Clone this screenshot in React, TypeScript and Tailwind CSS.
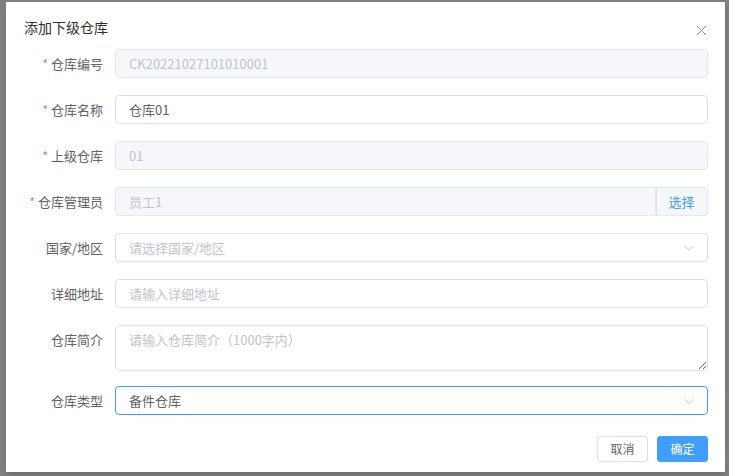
import React from "react";

const font = { fontFamily: '"Noto Sans CJK SC", "Liberation Sans", sans-serif' };

function Chevron ()
{
  return (
    <svg width="12" height="12" viewBox="0 0 12 12" className="text-[#c0c4cc]">
      <path d="M1.5 4 L6 8.5 L10.5 4" fill="none" stroke="currentColor" strokeWidth="1" />
    </svg>
  );
}

function Row ( { label, required, children, className = "mb-[17px]" }: { label: string; required?: boolean; children: React.ReactNode; className?: string } )
{
  return (
    <div className={ `flex items-start ${ className }` }>
      <div className="w-[91px] h-[29px] pr-3 flex items-center justify-end text-[13px] text-[#606266] shrink-0">
        { required && <span className="text-[#f56c6c] mr-[3px] text-[12px]">*</span> }
        { label }
      </div>
      <div className="flex-1 min-w-0">{ children }</div>
    </div>
  );
}

export default function App ()
{
  const inputBase = "w-full h-[29px] rounded-[4px] border px-[13px] text-[13px] flex items-center";
  return (
    <div className="w-[729px] h-[476px] bg-[#7f7f7f] overflow-hidden" style={ font }>
      <div className="ml-[6px] mt-[2px] w-[719px] h-[470px] bg-white pl-[18px] pr-[17px] shadow-md">
        {/* header */ }
        <div className="flex items-start justify-between pt-[15px]">
          <div className="text-[14px] leading-[20px] text-[#303133]">添加下级仓库</div>
          <svg width="11" height="11" viewBox="0 0 11 11" className="mt-[8px] mr-[1px] text-[#909399]">
            <path d="M1 1 L10 10 M10 1 L1 10" stroke="currentColor" strokeWidth="1" />
          </svg>
        </div>

        {/* form */ }
        <div className="mt-[12px]">
          <Row label="仓库编号" required>
            <div className={ `${ inputBase } bg-[#f5f7fa] border-[#e4e7ed] text-[#c0c4cc]` }>CK20221027101010001</div>
          </Row>
          <Row label="仓库名称" required>
            <div className={ `${ inputBase } bg-white border-[#dcdfe6] text-[#606266]` }>仓库01</div>
          </Row>
          <Row label="上级仓库" required>
            <div className={ `${ inputBase } bg-[#f5f7fa] border-[#e4e7ed] text-[#c0c4cc]` }>01</div>
          </Row>
          <Row label="仓库管理员" required>
            <div className="flex h-[29px] w-full">
              <div className="flex-1 h-full rounded-l-[4px] border border-[#e4e7ed] bg-[#f5f7fa] px-[13px] text-[13px] text-[#c0c4cc] flex items-center">员工1</div>
              <div className="w-[52px] h-full rounded-r-[4px] border border-l-0 border-[#e4e7ed] bg-[#f5f7fa] flex items-center justify-center text-[13px] text-[#409eff] relative">
                <span className="absolute left-0 top-0 bottom-0 w-px bg-[#dcdfe6]" />
                选择
              </div>
            </div>
          </Row>
          <Row label="国家/地区">
            <div className={ `${ inputBase } bg-white border-[#dcdfe6] text-[#c0c4cc] justify-between pr-[12px]` }>
              <span>请选择国家/地区</span>
              <Chevron />
            </div>
          </Row>
          <Row label="详细地址">
            <div className={ `${ inputBase } bg-white border-[#dcdfe6] text-[#c0c4cc]` }>请输入详细地址</div>
          </Row>
          <Row label="仓库简介" className="mb-[15px]">
            <textarea
              readOnly
              placeholder="请输入仓库简介（1000字内）"
              className="block w-full h-[46px] rounded-[4px] border border-[#dcdfe6] px-[13px] py-[4px] text-[13px] leading-[20px] text-[#606266] placeholder:text-[#c0c4cc] outline-none resize-y"
              style={ font }
            />
          </Row>
          <Row label="仓库类型" className="mb-0">
            <div className={ `${ inputBase } bg-white border-[#409eff] text-[#606266] justify-between pr-[12px]` }>
              <span>备件仓库</span>
              <Chevron />
            </div>
          </Row>
        </div>

        {/* footer */ }
        <div className="flex justify-end gap-[9px] mt-[21px]">
          <div className="w-[51px] h-[26px] rounded-[3px] border border-[#dcdfe6] bg-white text-[12px] text-[#606266] flex items-center justify-center">取消</div>
          <div className="w-[51px] h-[26px] rounded-[3px] border border-[#409eff] bg-[#409eff] text-[12px] text-white flex items-center justify-center">确定</div>
        </div>
      </div>
    </div>
  );
}
